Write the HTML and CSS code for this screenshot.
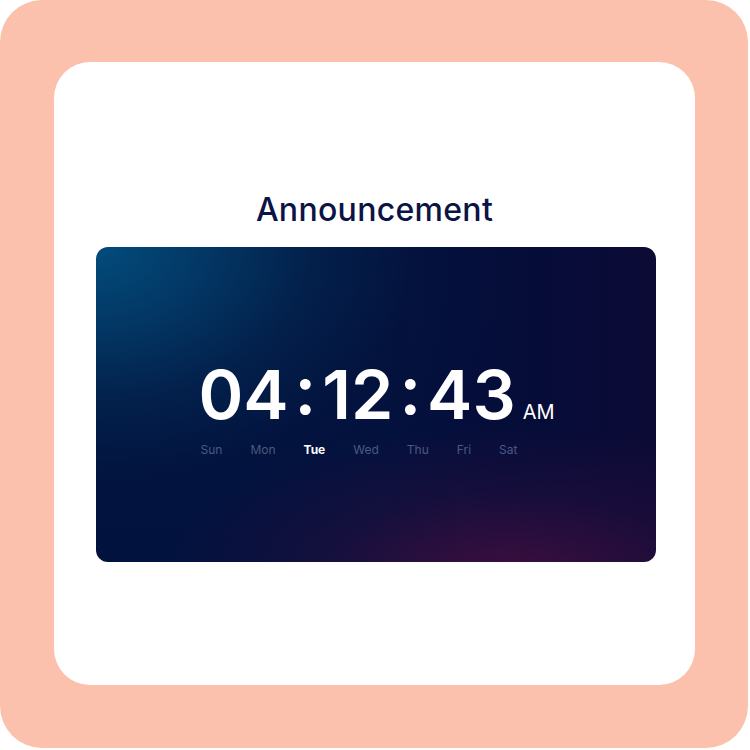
FILE: index.html
```html
<!DOCTYPE html>
<html>
<head>
<meta charset="utf-8">
<link rel="stylesheet" href="styles.css">
</head>
<body>
<div class="frame">
  <div class="card">
    <h1 class="title">Announcement</h1>
    <div class="panel">
      <div class="clock">
        <span class="time">04<span class="colon">:</span>12<span class="colon">:</span>43</span>
        <span class="ampm">AM</span>
      </div>
      <div class="days">
        <span>Sun</span>
        <span>Mon</span>
        <span class="active">Tue</span>
        <span>Wed</span>
        <span>Thu</span>
        <span>Fri</span>
        <span>Sat</span>
      </div>
    </div>
  </div>
</div>
</body>
</html>
```

FILE: styles.css
```css
html, body {
  margin: 0;
  padding: 0;
  background: #ffffff;
}
body {
  width: 750px;
  height: 750px;
  font-family: Inter, "Liberation Sans", sans-serif;
}
.frame {
  width: 748px;
  height: 748px;
  box-sizing: border-box;
  background: #fcc1ad;
  border-radius: 42px;
  padding: 62px 53px 63px 54px;
}
.card {
  width: 641px;
  height: 623px;
  background: #ffffff;
  border-radius: 36px;
  display: flex;
  flex-direction: column;
  align-items: center;
}
.title {
  margin: 128px 0 0 0;
  font-size: 32px;
  line-height: 40px;
  font-weight: 500;
  color: #0b1444;
  letter-spacing: 0.3px;
}
.panel {
  margin-top: 17px;
  margin-left: 3px;
  width: 560px;
  height: 315px;
  border-radius: 12px;
  background:
    radial-gradient(ellipse 340px 150px at 74% 104%, rgba(64, 14, 62, 0.95), rgba(42, 14, 62, 0.45) 55%, rgba(20, 14, 60, 0) 100%),
    radial-gradient(ellipse 430px 310px at 0% 0%, #024c7c 0%, rgba(3, 62, 108, 0.85) 25%, rgba(3, 42, 84, 0.6) 50%, rgba(3, 24, 64, 0.25) 75%, rgba(3, 18, 62, 0) 100%),
    linear-gradient(90deg, #02123f 0%, #03113d 50%, #060c38 80%, #0c0b36 100%);
  display: flex;
  flex-direction: column;
  align-items: center;
  justify-content: center;
  color: #ffffff;
}
.clock {
  display: flex;
  align-items: baseline;
  margin-top: 2px;
  margin-left: 1px;
}
.time {
  font-size: 68px;
  font-weight: 600;
  line-height: 80px;
}
.colon {
  position: relative;
  top: -5px;
  margin: 0 6px;
}
.ampm {
  font-size: 20px;
  font-weight: 400;
  margin-left: 7px;
}
.days {
  display: flex;
  gap: 28px;
  margin-top: 8px;
  font-size: 12px;
  line-height: 16px;
  color: #4a5a80;
  margin-right: 34px;
}
.days .active {
  color: #ffffff;
  font-weight: 700;
}
```
